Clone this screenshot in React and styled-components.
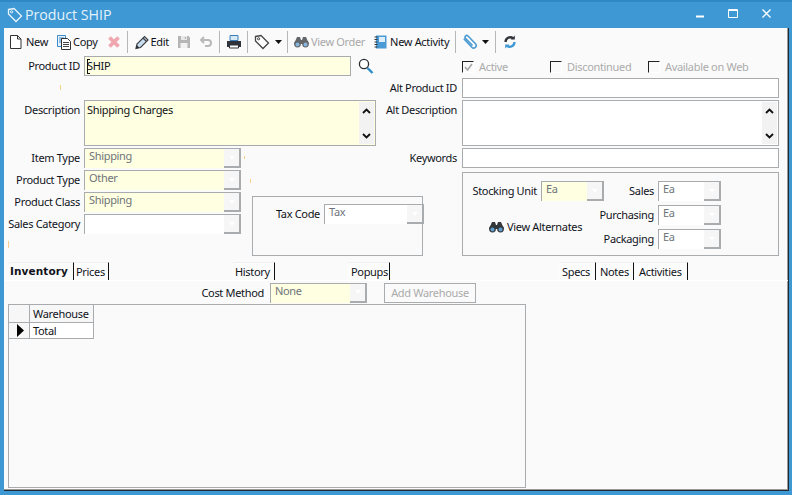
import React from 'react';
import styled, { createGlobalStyle } from 'styled-components';

const Global = createGlobalStyle`
  html, body { margin: 0; padding: 0; background: #3e98d4; }
  * { box-sizing: border-box; }
`;
const GREY = '#a9acaf';
const YEL = '#ffffe1';
const Win = styled.div`
  width: 792px; height: 495px; background: #3e98d4; border-top: 2px solid #2f87c5;
  display: flex; flex-direction: column; padding: 0 3px 4px 4px; overflow: hidden;
  font: 11px/14px "Noto Sans", Tahoma, sans-serif; color: #10131a; letter-spacing: -0.32px;
`;
const TitleBar = styled.div`
  height: 26px; flex: none; display: flex; align-items: center; padding: 0 0 0 3px; color: #e4f2fb;
  svg { display: block; }
`;
const Title = styled.div`font: 14.2px/20px "Open Sans", sans-serif; margin-left: 2px; letter-spacing: 0;`;
const WinBtns = styled.div`margin-left: auto; display: flex; align-items: center; gap: 24px; padding-right: 18px; margin-top: -3px;`;
const Body = styled.div`
  position: relative; flex: 1; background: #fafafa; display: flex; flex-direction: column;
  box-shadow: inset -1px -1px 0 #9a9a9a; border-right: 1px solid #1d2a33; border-bottom: 1px solid #1d2a33;
`;
const Toolbar = styled.div`height: 28px; flex: none; display: flex; align-items: center; padding: 0 0 1px 4px;`;
const Tool = styled.div`
  display: flex; align-items: center; gap: ${p => p.$gap ?? 2}px; margin-left: ${p => p.$ml ?? 0}px;
  color: ${p => (p.$off ? '#a9a9a9' : '#10131a')}; white-space: nowrap;
  svg { display: block; flex: none; }
`;
const Sep = styled.div`width: 1px; height: 22px; background: #b5b8ba; margin-left: ${p => p.$ml}px;`;
const Form = styled.div`display: flex; height: 206px; flex: none;`;
const Left = styled.div`width: 458px; flex: none; display: flex; flex-direction: column;`;
const Right = styled.div`width: 317px; flex: none; display: flex; flex-direction: column;`;
const Row = styled.div`display: flex; align-items: ${p => p.$top ? 'flex-start' : 'center'}; margin-bottom: 2px;`;
const Spacer = styled.div`height: 20px; margin-bottom: 2px;`;
const RightRow = styled(Row)`margin-left: -81px; margin-bottom: ${p => p.$mb ?? 2}px;`;
const Label = styled.div`
  width: ${p => p.$w ?? 76}px; flex: none; text-align: right; white-space: nowrap; padding-top: ${p => p.$pt ?? 0}px;
`;
const Input = styled.div`
  width: ${p => p.$w}px; height: ${p => p.$h ?? 20}px; margin-left: ${p => p.$ml ?? 4}px; flex: none;
  border: 1px solid ${GREY}; background: ${p => p.$bg ?? '#fff'}; padding: 2px 2px; position: relative;
  display: flex; justify-content: space-between;
`;
const Caret = styled.div`
  position: absolute; left: 2px; top: 2px; width: 3px; height: 15px;
  border-left: 1px solid #111; border-top: 1px solid #111; border-bottom: 1px solid #111;
`;
const Scroll = styled.div`
  width: 15px; margin: -1px -1px -1px 0; background: #f2f2f2; display: flex; flex-direction: column;
  justify-content: space-between; align-items: center; padding: 6px 0 5px; svg { display: block; }
`;
const Checks = styled.div`height: 22px; display: flex; align-items: center; flex: none;`;
const Check = styled.div`
  display: flex; align-items: center; gap: 5px; width: ${p => p.$w}px; color: #ababab;
`;
const Box = styled.div`
  width: 12px; height: 12px; background: #fafafa; border-left: 1px solid #222; border-top: 1px solid #222;
  border-right: 1px solid #fff; border-bottom: 1px solid #fff;
  svg { display: block; }
`;
const ComboBox = styled.div`
  width: ${p => p.$w}px; height: 20px; flex: none; margin-left: ${p => p.$ml ?? 0}px; display: flex;
  border-left: 1px solid ${GREY}; border-top: 1px solid ${GREY}; background: ${p => p.$bg ?? '#fff'};
`;
const ComboText = styled.div`flex: 1; padding: 0 0 0 4px; color: #70747a; margin-top: -1px; line-height: 15px;`;
const ComboBtn = styled.div`
  width: 17px; flex: none; background: #f6f6f6; border-right: 2px solid ${GREY}; border-bottom: 2px solid ${GREY};
  display: flex; align-items: center; justify-content: center;
  &::after { content: ''; border: 3.5px solid transparent; border-top: 4px solid #fff; margin-top: 3px; }
`;
const Lower = styled.div`display: flex; align-items: flex-start;`;
const Combos = styled.div`display: flex; flex-direction: column; flex: none;`;
const TaxGroup = styled.div`
  width: 171px; height: 60px; margin: 48px 0 0 11px; border: 1px solid ${GREY};
  display: flex; align-items: flex-start; padding: 7px 0 0 0;
`;
const Units = styled.div`
  margin-top: 4px; height: 84px; border: 1px solid ${GREY}; display: grid;
  grid-template-columns: 141px 55px 62px; grid-auto-rows: 24px; align-items: center; padding: 6px 0 0 0;
`;
const UnitField = styled.div`
  display: flex; align-items: center; justify-content: flex-end; height: 24px;
  grid-column: ${p => p.$col}; grid-row: ${p => p.$row};
`;
const Alt = styled.div`
  grid-column: 1; grid-row: 2 / 4; display: flex; align-items: center; gap: 3px; padding: 0 0 0 26px; height: 100%; margin-top: -1px;
  svg { display: block; }
`;
const Tabs = styled.div`height: 18px; flex: none; display: flex; align-items: flex-end; padding-left: 4px;`;
const Tab = styled.div`
  height: 18px; margin-left: ${p => p.$ml ?? 0}px; width: ${p => p.$w}px; flex: none; padding: 1px 0 0 ${p => p.$pl ?? 3}px;
  background: ${p => p.$on ? '#fafafa' : '#fcfcfc'}; border-right: 1px solid #111; border-top: 1px solid #f0f0f0;
  border-top-left-radius: 3px; white-space: nowrap; font-weight: ${p => p.$on ? 700 : 400};
  letter-spacing: ${p => p.$on ? '0.1px' : '-0.32px'}; font-family: ${p => p.$on ? '"DejaVu Sans", sans-serif' : 'inherit'};
  font-size: ${p => p.$on ? '10.5px' : '11px'};
  line-height: 15px;
`;
const Panel = styled.div`flex: 1; border-top: 1px solid #fff; display: flex; flex-direction: column; padding: 0 0 1px 4px;`;
const CostRow = styled.div`height: 23px; flex: none; display: flex; align-items: center;`;
const Btn = styled.div`
  width: 92px; height: 20px; margin-left: 17px; border: 1px solid ${GREY}; color: #ababab; text-align: center; line-height: 17px; margin-top: 1px;
`;
const Grid = styled.div`
  width: 518px; flex: 1; margin-bottom: 1px; border: 1px solid ${GREY}; display: grid; background: #fafafa;
  grid-template-columns: 21px 64px; grid-template-rows: 18px 16px; align-content: start; justify-content: start;
`;
const Cell = styled.div`
  border-right: 1px solid ${GREY}; border-bottom: 1px solid ${GREY}; background: ${p => p.$bg ?? '#f7f7f7'};
  padding: 0 0 0 ${p => p.$pl ?? 3}px; display: flex; align-items: center; color: #10131a;
  svg { display: block; }
`;
const Tick = styled.i`position: absolute; width: 1px; background: #f6cf8e; left: ${p => p.$x}px; top: ${p => p.$y}px; height: ${p => p.$h}px;`;

const I = { width: 16, height: 16, viewBox: '0 0 16 16', fill: 'none' };
const DocIcon = () => <svg {...I}><path d="M2.5 1.5h7l3.5 3.5v9.5H2.5z" fill="#fff" stroke="#333"/><path d="M9.5 1.5V5H13" stroke="#333"/></svg>;
const CopyIcon = () => <svg {...I}><path d="M1.5 1.5h8v11h-8z" fill="#e8f2fa" stroke="#3c8ccb"/><path d="M3 4h5M3 6h3M3 8h3" stroke="#3c8ccb"/><path d="M5.5 4.5h6l3 3v8h-9z" fill="#fff" stroke="#333"/><path d="M7 8.5h6M7 10.5h6M7 12.5h6" stroke="#444"/></svg>;
const XIcon = () => <svg {...I}><path d="M3.5 3.5l9 9M12.5 3.5l-9 9" stroke="#f0a6ae" strokeWidth="3.8"/></svg>;
const PencilIcon = () => <svg {...I}><path d="M2 14.5l1-4.5 7.5-7.5 3.5 3.5L6.5 13.5z" fill="#c9dff1" stroke="#3c4045" strokeWidth="1.2"/><path d="M9 4l3.5 3.5" stroke="#3c4045" strokeWidth="1.2"/><path d="M2 14.5l.8-3.4 2.6 2.6z" fill="#2b2f34"/></svg>;
const SaveIcon = () => <svg {...I}><path d="M2 2h10.5L14 3.5V14H2z" fill="#b5b5b5"/><path d="M5 2h6v4H5z" fill="#e9e9e9"/><path d="M8.8 3h1.2v2H8.8z" fill="#b5b5b5"/><path d="M4.5 9h7v5h-7z" fill="#f2f2f2"/></svg>;
const UndoIcon = () => <svg {...I}><path d="M6 3L3 6l3 3" stroke="#b9b9b9" strokeWidth="2"/><path d="M3.5 6H10a2.8 2.8 0 0 1 0 6H7" stroke="#b9b9b9" strokeWidth="2"/></svg>;
const PrinterIcon = () => <svg {...I}><path d="M4 1.5h8v5H4z" fill="#d8e9f6" stroke="#3a7fb8"/><path d="M1 7h14v6H1z" fill="#30343a"/><path d="M3.5 11h9v3h-9z" fill="#fff" stroke="#30343a"/></svg>;
const TagIcon = ({ c = '#444', fill = '#fff' }) => <svg {...I}><path d="M1.5 2.5l5.5-1 7.5 7.5-5.5 5.5L1.5 7z" fill={fill} stroke={c} strokeWidth="1.3"/><circle cx="4.6" cy="4.8" r="1.1" stroke={c}/></svg>;
const Down = () => <svg width="7" height="4" viewBox="0 0 7 4" style={{ display: 'block' }}><path d="M0 0h7L3.5 4z" fill="#111"/></svg>;
const Bino = ({ op = 1 }) => <svg width="15" height="12" viewBox="0 0 15 12" style={{ opacity: op }}><path d="M3 1h3l1 3h1l1-3h3l3 7H0z" fill="#33363b"/><circle cx="3.5" cy="8" r="3.4" fill="#33363b"/><circle cx="11.5" cy="8" r="3.4" fill="#33363b"/><circle cx="3.5" cy="8.5" r="2" fill="#5e9fd0"/><circle cx="11.5" cy="8.5" r="2" fill="#5e9fd0"/></svg>;
const BookIcon = () => <svg {...I}><path d="M3 1.5h10.5v13H3z" fill="#4a9bd5"/><path d="M6 3h6v5H6z" fill="#dcecf8"/><path d="M1.5 3h3M1.5 5.5h3M1.5 8h3M1.5 10.5h3M1.5 13h3" stroke="#333"/></svg>;
const ClipIcon = () => <svg {...I}><path d="M1.8 4.8l8 8.4a2.5 2.5 0 0 0 3.7-3.4L6 2a1.7 1.7 0 0 0-2.5 2.3l7 7.2" stroke="#4d9bd3" strokeWidth="1.6"/></svg>;
const RefreshIcon = () => <svg {...I}><path d="M11 4.2A4.6 4.6 0 0 0 3.6 8" stroke="#30343a" strokeWidth="2.4"/><path d="M8.8 5.6h4V1.6z" fill="#30343a"/><path d="M5 11.8A4.6 4.6 0 0 0 12.4 8" stroke="#3e98d4" strokeWidth="2.4"/><path d="M7.2 10.4h-4v4z" fill="#3e98d4"/></svg>;
const SearchIcon = () => <svg width="16" height="17" viewBox="0 0 16 17" style={{ display: 'block', marginLeft: 7 }}><circle cx="6" cy="6" r="4.6" stroke="#2b2f34" strokeWidth="1.3" fill="#fff"/><path d="M9.5 10l5 5" stroke="#2f8ccb" strokeWidth="2.4"/></svg>;
const Up = () => <svg width="9" height="6" viewBox="0 0 9 6"><path d="M1 5l3.5-3.5L8 5" stroke="#111" strokeWidth="1.8" fill="none"/></svg>;
const Dn = () => <svg width="9" height="6" viewBox="0 0 9 6"><path d="M1 1l3.5 3.5L8 1" stroke="#111" strokeWidth="1.8" fill="none"/></svg>;

const Combo = ({ w, ml, bg, text }) => (
  <ComboBox $w={w} $ml={ml} $bg={bg}><ComboText>{text}</ComboText><ComboBtn /></ComboBox>
);

export default function App() {
  return (
    <Win>
      <Global />
      <TitleBar>
        <TagIcon c="#eaf5fc" fill="transparent" />
        <Title>Product SHIP</Title>
        <WinBtns>
          <svg width="8" height="9" viewBox="0 0 8 9"><path d="M0 7.5h8" stroke="#fff" strokeWidth="2"/></svg>
          <svg width="10" height="9" viewBox="0 0 10 9" fill="none"><path d="M.5.5h9v8h-9z M0 1.5h10" stroke="#fff"/></svg>
          <svg width="9" height="9" viewBox="0 0 9 9"><path d="M.5.5l8 8M8.5.5l-8 8" stroke="#fff" strokeWidth="1.3"/></svg>
        </WinBtns>
      </TitleBar>
      <Body>
        <Toolbar>
          <Tool><DocIcon />New</Tool>
          <Tool $ml={8} $gap={1}><CopyIcon />Copy</Tool>
          <Tool $ml={8}><XIcon /></Tool>
          <Sep $ml={5} />
          <Tool $ml={6} $gap={1}><PencilIcon />Edit</Tool>
          <Tool $ml={7}><SaveIcon /></Tool>
          <Tool $ml={6}><UndoIcon /></Tool>
          <Sep $ml={5} />
          <Tool $ml={6}><PrinterIcon /></Tool>
          <Sep $ml={5} />
          <Tool $ml={6}><TagIcon /></Tool>
          <Tool $ml={5}><Down /></Tool>
          <Sep $ml={5} />
          <Tool $ml={6} $off><Bino op={0.75} />View Order</Tool>
          <Tool $ml={8} $gap={1}><BookIcon />New Activity</Tool>
          <Sep $ml={6} />
          <Tool $ml={6}><ClipIcon /></Tool>
          <Tool $ml={4}><Down /></Tool>
          <Sep $ml={6} />
          <Tool $ml={6}><RefreshIcon /></Tool>
        </Toolbar>
        <Form>
          <Left>
            <Row><Label>Product ID</Label><Input $w={267} $bg={YEL}><Caret />SHIP</Input><SearchIcon /></Row>
            <Spacer />
            <Row $top><Label $pt={3}>Description</Label><Input $w={292} $h={46} $bg={YEL}>Shipping Charges<Scroll><Up /><Dn /></Scroll></Input></Row>
            <Lower>
              <Combos>
                <Row><Label>Item Type</Label><Combo w={157} ml={4} bg={YEL} text="Shipping" /></Row>
                <Row><Label>Product Type</Label><Combo w={157} ml={4} bg={YEL} text="Other" /></Row>
                <Row><Label>Product Class</Label><Combo w={157} ml={4} bg={YEL} text="Shipping" /></Row>
                <Row><Label>Sales Category</Label><Combo w={157} ml={4} text="" /></Row>
              </Combos>
              <TaxGroup>
                <Label $w={67} $pt={3}>Tax Code</Label>
                <Combo w={100} ml={4} text="Tax" />
              </TaxGroup>
            </Lower>
          </Left>
          <Right>
            <Checks>
              <Check $w={88}>
                <Box><svg width="11" height="11" viewBox="0 0 11 11"><path d="M2 5l2.5 3L9 2" stroke="#a8a8a8" strokeWidth="1.6" fill="none"/></svg></Box>Active
              </Check>
              <Check $w={98}><Box />Discontinued</Check>
              <Check $w={120}><Box />Available on Web</Check>
            </Checks>
            <RightRow><Label>Alt Product ID</Label><Input $w={317} $ml={5} /></RightRow>
            <RightRow $top><Label $pt={3}>Alt Description</Label><Input $w={317} $h={46} $ml={5}><span /><Scroll><Up /><Dn /></Scroll></Input></RightRow>
            <RightRow $mb={0}><Label>Keywords</Label><Input $w={317} $ml={5} /></RightRow>
            <Units>
              <UnitField $col="1" $row="1">Stocking Unit<Combo w={63} ml={4} bg={YEL} text="Ea" /></UnitField>
              <UnitField $col="2 / 4" $row="1">Sales<Combo w={63} ml={4} text="Ea" /></UnitField>
              <Alt><Bino />View Alternates</Alt>
              <UnitField $col="2 / 4" $row="2">Purchasing<Combo w={63} ml={4} text="Ea" /></UnitField>
              <UnitField $col="2 / 4" $row="3">Packaging<Combo w={63} ml={4} text="Ea" /></UnitField>
            </Units>
          </Right>
        </Form>
        <Tabs>
          <Tab $on $w={66} $pl={2}>Inventory</Tab>
          <Tab $w={35} $pl={2}>Prices</Tab>
          <Tab $w={43} $ml={123} $pl={3}>History</Tab>
          <Tab $w={43} $ml={72} $pl={4}>Popups</Tab>
          <Tab $w={37} $ml={169} $pl={3}>Specs</Tab>
          <Tab $w={38} $pl={4}>Notes</Tab>
          <Tab $w={54} $pl={5}>Activities</Tab>
        </Tabs>
        <Panel>
          <CostRow>
            <Label $w={256}>Cost Method</Label>
            <Combo w={97} ml={6} bg={YEL} text="None" />
            <Btn>Add Warehouse</Btn>
          </CostRow>
          <Grid>
            <Cell />
            <Cell>Warehouse</Cell>
            <Cell $pl={8}><svg width="7" height="13" viewBox="0 0 7 13"><path d="M0 0l7 6.5L0 13z" fill="#000"/></svg></Cell>
            <Cell $bg="#fff">Total</Cell>
          </Grid>
        </Panel>
        <Tick $x={56} $y={57} $h={5} />
        <Tick $x={240} $y={128} $h={3} />
        <Tick $x={246} $y={151} $h={4} />
        <Tick $x={4} $y={213} $h={7} />
      </Body>
    </Win>
  );
}
